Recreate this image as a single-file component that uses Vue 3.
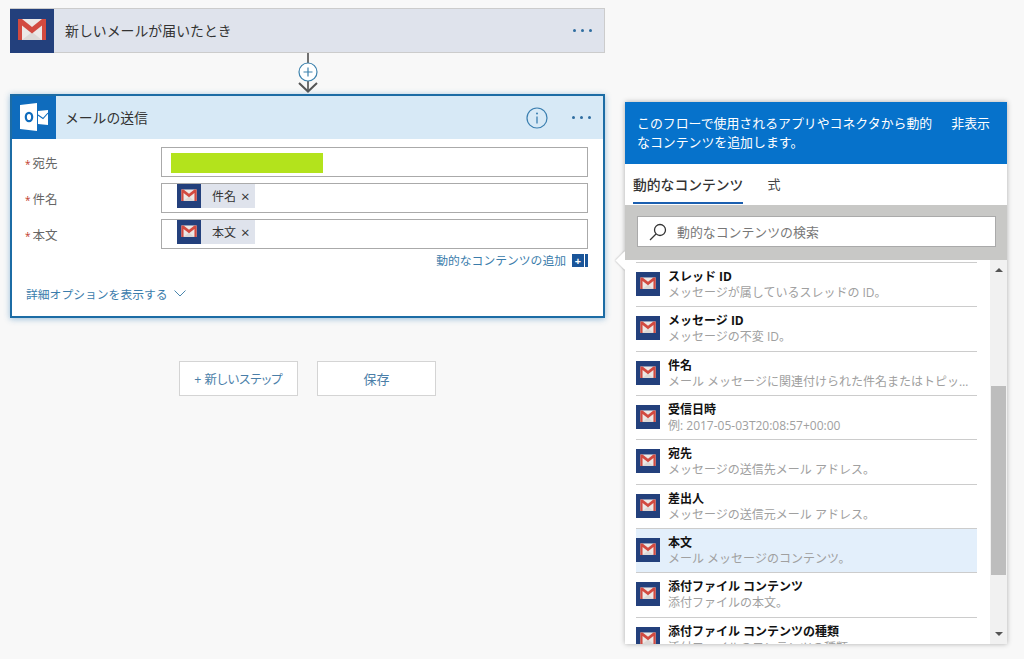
<script setup>
const fields = [
  { label: '宛先', bar: true },
  { label: '件名', tag: '件名' },
  { label: '本文', tag: '本文' },
]

const rows = [
  { title: 'スレッド ID', desc: 'メッセージが属しているスレッドの ID。' },
  { title: 'メッセージ ID', desc: 'メッセージの不変 ID。' },
  { title: '件名', desc: 'メール メッセージに関連付けられた件名またはトピックです。メッセージの件名。' },
  { title: '受信日時', desc: '例: 2017-05-03T20:08:57+00:00' },
  { title: '宛先', desc: 'メッセージの送信先メール アドレス。' },
  { title: '差出人', desc: 'メッセージの送信元メール アドレス。' },
  { title: '本文', desc: 'メール メッセージのコンテンツ。', active: true },
  { title: '添付ファイル コンテンツ', desc: '添付ファイルの本文。' },
  { title: '添付ファイル コンテンツの種類', desc: '添付ファイルのコンテンツの種類。' },
]
</script>

<template>
  <main class="page">
    <svg class="defs" width="0" height="0">
      <symbol id="gmail" viewBox="0 0 44 44">
        <rect width="44" height="44" fill="#23407c" />
        <rect x="8" y="10" width="28" height="21" fill="#ece8e6" />
        <path d="M12 31l10-8 10 8z" fill="#dcd8d6" />
        <path d="M8 31V10h4l10 8 10-8h4v21h-4V16.500l-10 8-10-8V31z" fill="#d24a40" />
      </symbol>
    </svg>

    <section class="flow">
      <div class="trigger">
        <svg class="big-icon"><use href="#gmail" /></svg>
        <span class="card-title">新しいメールが届いたとき</span>
        <span class="dots"><i></i><i></i><i></i></span>
      </div>

      <svg class="connector" width="24" height="41" viewBox="0 0 24 41">
        <path d="M12 0v10M12 28v10" stroke="#444" stroke-width="1.500" fill="none" />
        <path d="M3 30l9 8.500 9-8.500" stroke="#555" stroke-width="2" fill="none" />
        <circle cx="12" cy="19" r="9" fill="#fff" stroke="#3d82ad" stroke-width="1.200" />
        <path d="M12 14.500v9M7.500 19h9" stroke="#3d82ad" stroke-width="1.200" />
      </svg>

      <div class="action">
        <div class="action-head">
          <div class="outlook">
            <svg width="44" height="43" viewBox="0 0 44 43">
              <path d="M8 9L25 7v28l-17-2z" fill="#fff" />
              <ellipse cx="17" cy="21" rx="3.200" ry="4.200" fill="none" stroke="#0f6cbd" stroke-width="2.200" />
              <path d="M26 15l10-1v15l-10-1z" fill="#fff" />
              <path d="M26 19l5 3.500 5-5.500" stroke="#0f6cbd" stroke-width="1.100" fill="none" />
            </svg>
          </div>
          <span class="card-title">メールの送信</span>
          <svg class="info" width="22" height="22" viewBox="0 0 22 22">
            <circle cx="11" cy="11" r="10" fill="none" stroke="#3b7fb0" stroke-width="1.200" />
            <path d="M11 9.500v7" stroke="#3b7fb0" stroke-width="1.300" />
            <circle cx="11" cy="6.500" r="1" fill="#3b7fb0" />
          </svg>
          <span class="dots"><i></i><i></i><i></i></span>
        </div>

        <div class="action-body">
          <div v-for="f in fields" :key="f.label" class="field">
            <label><em>*</em>{{ f.label }}</label>
            <div class="input">
              <span v-if="f.bar" class="bar"></span>
              <span v-if="f.tag" class="tag">
                <svg class="small-icon"><use href="#gmail" /></svg>
                <b>{{ f.tag }}</b>
                <s>×</s>
              </span>
            </div>
          </div>

          <div class="add-link">
            <span class="add-text">動的なコンテンツの追加</span>
            <span class="add-icon">+</span>
            <span class="add-line"></span>
          </div>

          <div class="advanced">
            詳細オプションを表示する
            <svg width="12" height="7" viewBox="0 0 12 7">
              <path d="M.5.500L6 6l5.500-5.500" fill="none" stroke="#4a86ad" />
            </svg>
          </div>
        </div>
      </div>

      <div class="buttons">
        <button>+ 新しいステップ</button>
        <button>保存</button>
      </div>
    </section>

    <aside class="panel">
      <span class="arrow"></span>
      <div class="panel-head">
        <p>このフローで使用されるアプリやコネクタから動的なコンテンツを追加します。</p>
        <span>非表示</span>
      </div>
      <div class="tabs">
        <span class="tab on">動的なコンテンツ</span>
        <span class="tab">式</span>
      </div>
      <div class="band">
        <div class="search">
          <svg width="18" height="18" viewBox="0 0 18 18">
            <circle cx="11" cy="7" r="5.500" fill="none" stroke="#333" stroke-width="1.300" />
            <path d="M7 11l-6 6" stroke="#333" stroke-width="1.300" />
          </svg>
          <span>動的なコンテンツの検索</span>
        </div>
      </div>
      <div class="list-wrap">
        <div class="list">
          <div v-for="r in rows" :key="r.title" class="row" :class="{ active: r.active }">
            <svg class="small-icon"><use href="#gmail" /></svg>
            <div class="row-text">
              <div class="row-title">{{ r.title }}</div>
              <div class="row-desc">{{ r.desc }}</div>
            </div>
          </div>
        </div>
        <div class="scroll">
          <span class="up"></span>
          <span class="thumb"></span>
          <span class="down"></span>
        </div>
      </div>
    </aside>
  </main>
</template>

<style>
html, body {
  margin: 0;
  height: 659px;
  overflow: hidden;
  background: #f8f8f8;
}
</style>

<style scoped>
.page {
  display: flex;
  align-items: flex-start;
  gap: 20px;
  height: 659px;
  padding: 8px 0 0 10px;
  box-sizing: border-box;
  font-family: "Open Sans", "Noto Sans CJK JP", sans-serif;
  color: #333;
}
.defs {
  position: absolute;
}

.flow {
  width: 595px;
  display: flex;
  flex-direction: column;
  align-items: center;
}

.trigger {
  width: 100%;
  height: 45px;
  box-sizing: border-box;
  display: flex;
  align-items: center;
  background: #dfe3ec;
  border: 1px solid #ccc;
  border-left: none;
}
.big-icon {
  width: 44px;
  height: 44px;
  flex: none;
}
.small-icon {
  width: 24px;
  height: 24px;
  flex: none;
}
.card-title {
  margin-left: 11px;
  padding-bottom: 2px;
  font-size: 13.900px;
  flex: 1;
}
.dots {
  display: flex;
  gap: 5px;
  margin-right: 12px;
}
.dots i {
  width: 3px;
  height: 3px;
  border-radius: 50%;
  background: #2f6da0;
}

.connector {
  display: block;
  flex: none;
}

.action {
  width: 100%;
  height: 224px;
  box-sizing: border-box;
  border: 2px solid #1c6ca5;
  background: #fff;
  box-shadow: 0 1px 6px rgba(40, 120, 180, 0.45);
}
.action-head {
  height: 43px;
  display: flex;
  align-items: center;
  background: #d7e9f6;
}
.action-head .card-title {
  margin-left: 9px;
  font-size: 13.800px;
}
.action-head .dots {
  margin-right: 12px;
}
.outlook {
  width: 44px;
  height: 43px;
  background: #0f6cbd;
  flex: none;
}
.info {
  margin-right: 24px;
}

.action-body {
  padding: 8px 15px 0 13px;
}
.field {
  display: flex;
  margin-bottom: 6px;
}
.field label {
  width: 136px;
  height: 30px;
  flex: none;
  font-size: 12.500px;
  line-height: 33px;
  color: #666;
}
.field em {
  color: #c0392b;
  font-style: normal;
  font-size: 10px;
  margin-right: 2px;
}
.input {
  flex: 1;
  height: 30px;
  box-sizing: border-box;
  border: 1px solid #aaa;
  background: #fff;
}
.bar {
  display: block;
  width: 152px;
  height: 20px;
  margin: 5px 0 0 9px;
  background: #b3e31c;
}
.tag {
  display: flex;
  align-items: center;
  width: 78px;
  height: 24px;
  margin-left: 15px;
  background: #dfe3ec;
  font-size: 12px;
}
.tag b {
  font-weight: 400;
  margin-left: 11px;
  color: #333;
}
.tag s {
  text-decoration: none;
  margin-left: 5px;
  font-size: 15px;
  color: #333;
}

.add-link {
  display: flex;
  align-items: center;
  justify-content: flex-end;
  height: 13px;
  margin-top: -1px;
  font-size: 11.800px;
  color: #3a7cab;
}
.add-text {
  margin-top: -2px;
}
.add-icon {
  width: 12px;
  height: 13px;
  margin-left: 6px;
  background: #1a5599;
  color: #fff;
  font-size: 11px;
  line-height: 13px;
  font-weight: 700;
  text-align: center;
}
.add-line {
  width: 3px;
  height: 13px;
  margin-left: 1px;
  background: #1a5599;
}
.advanced {
  display: flex;
  align-items: center;
  gap: 6px;
  height: 18px;
  margin-top: 17px;
  padding-left: 1px;
  font-size: 11.800px;
  color: #3a7cab;
}

.buttons {
  display: flex;
  gap: 19px;
  margin-top: 43px;
}
.buttons button {
  width: 119px;
  height: 35px;
  background: #fff;
  border: 1px solid #d4d4d4;
  font: inherit;
  font-size: 12.400px;
  font-feature-settings: "palt";
  color: #4a7ea8;
  padding: 0;
}
.buttons button + button {
  font-size: 13px;
}

.panel {
  position: relative;
  width: 382px;
  height: 542px;
  margin-top: 94px;
  background: #fff;
  flex: none;
  box-shadow: 0 0 5px rgba(0, 0, 0, 0.3);
}
.arrow {
  position: absolute;
  left: -7px;
  top: 152px;
  width: 13px;
  height: 13px;
  background: #fff;
  box-shadow: 0 0 2px rgba(0, 0, 0, 0.35);
  transform: rotate(45deg);
}
.panel-head {
  position: relative;
  height: 62px;
  box-sizing: border-box;
  padding: 12px 17px 0 12px;
  display: flex;
  justify-content: space-between;
  background: #0672cb;
  color: #fff;
  font-size: 12.900px;
  line-height: 19px;
}
.panel-head p {
  margin: 0;
  width: 300px;
}
.tabs {
  position: relative;
  height: 41px;
  box-sizing: border-box;
  display: flex;
  gap: 24px;
  padding-left: 8px;
  background: #fff;
}
.tab {
  font-size: 13px;
  line-height: 41px;
  height: 40px;
  color: #444;
}
.tab.on {
  font-size: 13.800px;
  font-weight: 500;
  color: #333;
  box-sizing: border-box;
  border-bottom: 2px solid #1b5fb0;
}
.band {
  position: relative;
  height: 55px;
  box-sizing: border-box;
  padding: 11px 11px 0 12px;
  background: #c8c8c6;
}
.search {
  height: 31px;
  box-sizing: border-box;
  border: 1px solid #aaa;
  background: #fff;
  display: flex;
  align-items: center;
  gap: 10px;
  padding-left: 11px;
  font-size: 12.900px;
  color: #777;
}

.list-wrap {
  position: relative;
  display: flex;
  height: 384px;
  overflow: hidden;
  background: #fff;
}
.list {
  width: 341px;
  margin: 2px 13px 0 11px;
  flex: none;
}
.row {
  height: 44.330px;
  box-sizing: border-box;
  border-top: 1px solid #ccc;
  display: flex;
  gap: 8px;
  padding-top: 9px;
}
.row.active {
  background: #e3effb;
}
.row-text {
  margin-top: -3px;
  min-width: 0;
  flex: 1;
  padding-right: 4px;
}
.row-title {
  font-size: 12px;
  line-height: 16px;
  font-weight: 700;
  color: #111;
}
.row-desc {
  font-size: 12px;
  line-height: 16px;
  color: #a0a0a0;
  white-space: nowrap;
  overflow: hidden;
  text-overflow: ellipsis;
}

.scroll {
  width: 17px;
  background: #f1f1f1;
  display: flex;
  flex-direction: column;
  align-items: center;
  flex: none;
}
.up,
.down {
  width: 0;
  height: 0;
  border-left: 4px solid transparent;
  border-right: 4px solid transparent;
}
.up {
  margin-top: 8px;
  border-bottom: 4px solid #555;
}
.thumb {
  width: 15px;
  height: 189px;
  margin-top: 114px;
  background: #bdbdbd;
}
.down {
  margin-top: 57px;
  border-top: 4px solid #555;
}
</style>
